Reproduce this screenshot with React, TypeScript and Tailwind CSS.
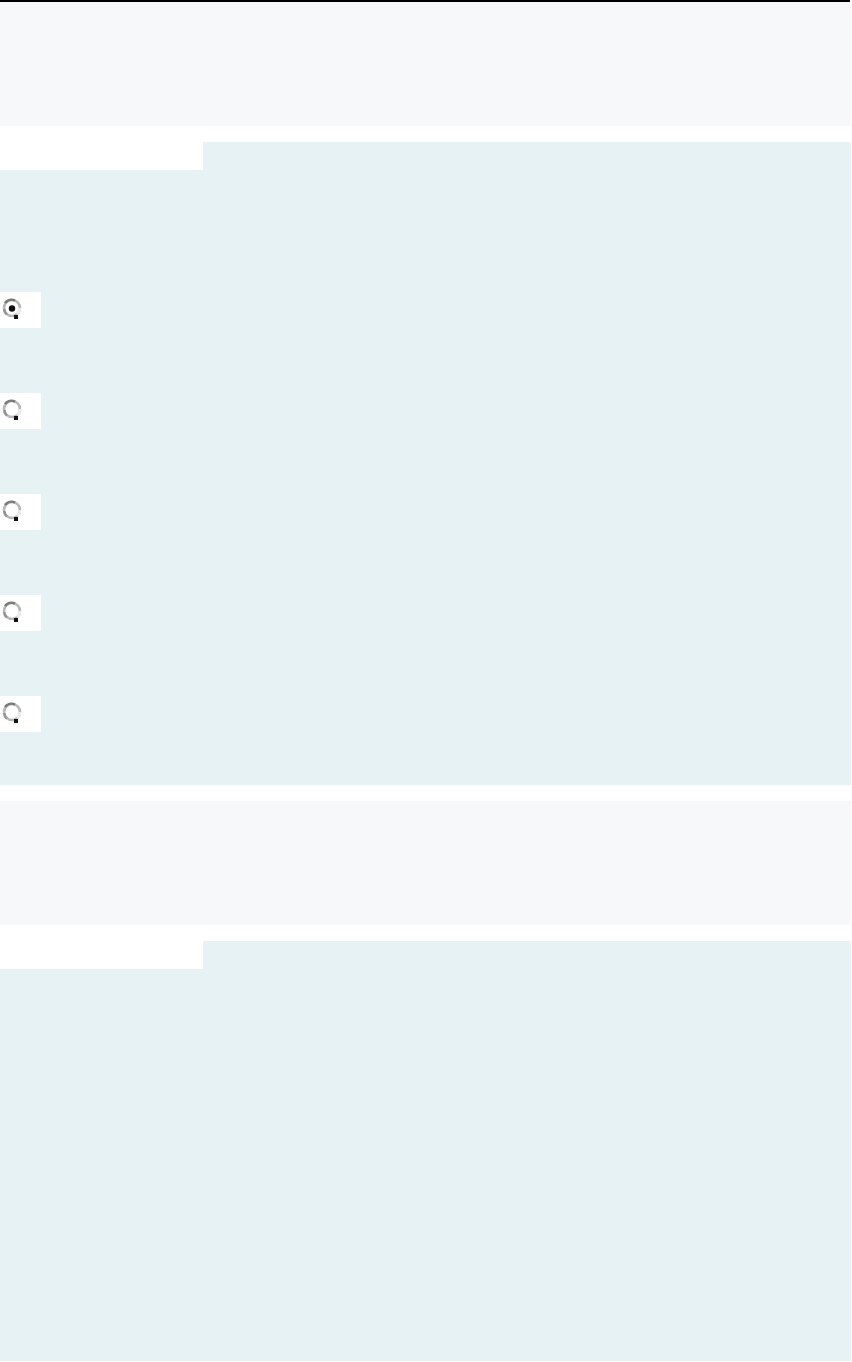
const Radio = ({ checked }: { checked?: boolean }) => (
  <div className="flex h-9 w-[41px] items-start bg-white pl-[1px] pt-[5px]">
    <svg width="22" height="22" viewBox="0 0 22 22">
      <circle cx="11" cy="11" r="8" fill="#ffffff" stroke="#b8b8b8" strokeWidth="2.6" />
      <path d="M4 6 A8 8 0 0 1 14 3.6" fill="none" stroke="#7a7a7a" strokeWidth="2.6" />
      <path d="M3.2 12 A8 8 0 0 0 6 17.5" fill="none" stroke="#959595" strokeWidth="2.6" />
      <path d="M16 17 A8 8 0 0 0 19 11" fill="none" stroke="#ececec" strokeWidth="2.6" />
      <rect x="13" y="18" width="4" height="4" fill="#111111" />
      {checked && <circle cx="11" cy="11.5" r="3.2" fill="#111111" />}
    </svg>
  </div>
);

function Section({ radios }: { radios: boolean }) {
  return (
    <div>
      <div className="h-[124px] bg-[#f6f8fa]" />
      <div className="h-4 bg-white" />
      <div className="flex h-7">
        <div className="w-[203px] bg-white" />
        <div className="flex-1 bg-[#e6f2f3]" />
      </div>
      {radios ? (
        <div className="flex flex-col gap-[65px] bg-[#e6f2f3] pt-[122px] pb-[53px]">
          <Radio checked />
          <Radio />
          <Radio />
          <Radio />
          <Radio />
        </div>
      ) : (
        <div className="h-[392px] bg-[#e6f2f3]" />
      )}
    </div>
  );
}

export default function App() {
  return (
    <div className="w-[852px] bg-white">
      <div className="h-[2px] w-[850px] bg-black" />
      <div className="w-[851px]">
        <Section radios />
        <div className="h-4 bg-white" />
        <Section radios={false} />
      </div>
    </div>
  );
}
